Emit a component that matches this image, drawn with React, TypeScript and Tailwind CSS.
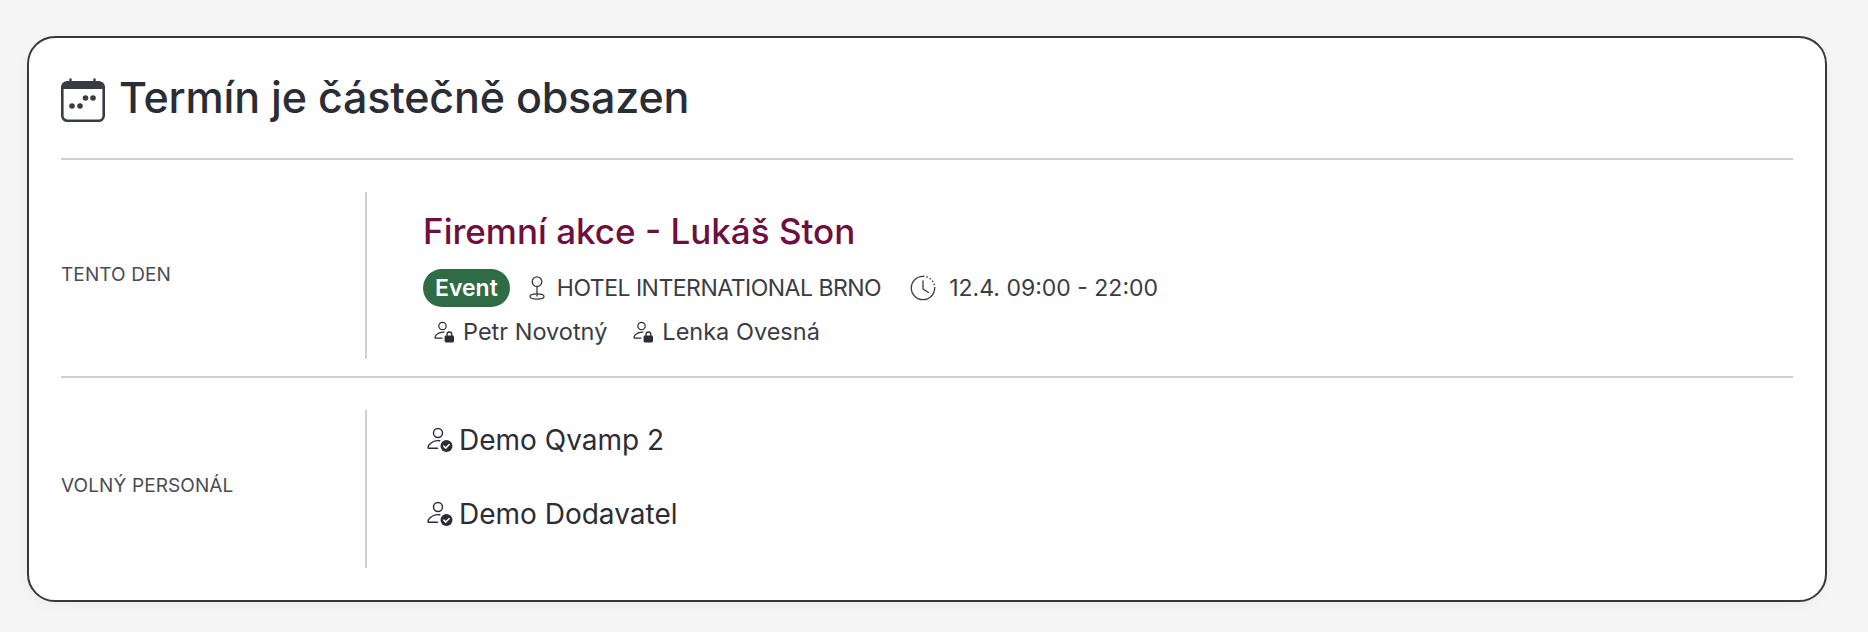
const PersonCheck = () => (
  <svg viewBox="0 0 26 26" className="w-[26px] h-[26px] shrink-0 text-[#2b2d36]">
    <circle cx="11" cy="6" r="4.5" fill="none" stroke="currentColor" strokeWidth="1.4" />
    <path d="M1 20.8c0-1.2.5-2.6 1.6-3.6 2.2-2.2 5-3.6 8.4-3.6.6 0 1.2 0 1.8.1M1.2 21.2h9.3" fill="none" stroke="currentColor" strokeWidth="1.4" strokeLinecap="round" />
    <circle cx="19.5" cy="19" r="6" fill="currentColor" />
    <path d="M16.8 19.1l2 2 3.4-3.6" fill="none" stroke="#fff" strokeWidth="1.5" strokeLinecap="round" strokeLinejoin="round" />
  </svg>
);

const PersonLock = () => (
  <svg viewBox="0 0 21 22" className="w-[21px] h-[22px] shrink-0 text-[#2b2d36]">
    <circle cx="8.5" cy="5" r="3.7" fill="none" stroke="currentColor" strokeWidth="1.2" />
    <path d="M1 16.8c0-1 .4-2 1.2-2.9 1.7-1.7 3.9-2.8 6.6-2.8.4 0 .8 0 1.2.1M1.2 17.2h6.8" fill="none" stroke="currentColor" strokeWidth="1.2" strokeLinecap="round" />
    <path d="M13 15v-1.6a2.4 2.4 0 0 1 4.8 0V15" fill="none" stroke="currentColor" strokeWidth="1.3" />
    <rect x="10.6" y="14.5" width="9.4" height="7" rx="1.4" fill="currentColor" />
  </svg>
);

const CalendarIcon = () => (
  <svg viewBox="0 0 44 44" className="w-[44px] h-[44px] shrink-0 mt-[6px] text-[#3a3c44]">
    <path d="M9.5 .5v6M33.5 .5v6" stroke="currentColor" strokeWidth="2.4" />
    <rect x="1.3" y="4.3" width="41.4" height="38.4" rx="5" fill="none" stroke="currentColor" strokeWidth="2.6" />
    <path d="M1 9a5 5 0 0 1 5-5h32a5 5 0 0 1 5 5v2H1z" fill="currentColor" />
    <circle cx="11" cy="28" r="2.8" fill="currentColor" />
    <circle cx="19" cy="28" r="2.8" fill="currentColor" />
    <circle cx="24.5" cy="20" r="2.8" fill="currentColor" />
    <circle cx="32" cy="20" r="2.8" fill="currentColor" />
  </svg>
);

const PinIcon = () => (
  <svg viewBox="0 0 16 24" className="w-[16px] h-[24px] shrink-0 text-[#3a3c44]" fill="none" stroke="currentColor" strokeWidth="1.3">
    <circle cx="8" cy="5.7" r="4.8" />
    <path d="M8 10.5V20.5" />
    <ellipse cx="8" cy="20.5" rx="7" ry="2.6" />
  </svg>
);

const ClockIcon = () => (
  <svg viewBox="0 0 26 26" className="w-[26px] h-[26px] shrink-0 text-[#3a3c44]" fill="none" stroke="currentColor" strokeWidth="1.3">
    <path d="M13 1.3A11.7 11.7 0 1 0 24.7 13" strokeLinecap="round" />
    <path d="M13 1.3A11.7 11.7 0 0 1 24.7 13" strokeDasharray="1.3 2.2" strokeWidth="1.5" />
    <path d="M13 6v8l5.5 3.5" strokeLinecap="round" strokeLinejoin="round" />
  </svg>
);

export default function App() {
  return (
    <div className="min-h-[632px] bg-[#f5f5f5] pt-[36px] pl-[27px] pr-[41px] font-['Inter',sans-serif] text-[#2b2d36]">
      <div className="h-[566px] bg-white border-2 border-[#38393d] rounded-[28px] px-[32px] shadow-[0_4px_12px_rgba(0,0,0,0.04)]">
        <div className="h-[122px] flex items-center gap-[14px] border-b-2 border-[#d0d0d0] pb-[2px]">
          <CalendarIcon />
          <h1 className="text-[43px] font-medium tracking-[-0.2px]">Termín je částečně obsazen</h1>
        </div>

        <div className="flex items-center pt-[32px] pb-[17px] border-b-2 border-[#d0d0d0]">
          <div className="w-[304px] text-[19px] tracking-[0.1px] text-[#4a4c54] uppercase">Tento den</div>
          <div className="h-[167px] border-l-2 border-[#d0d0d0] pl-[56px] flex flex-col justify-center pt-[10px]">
            <div className="text-[35px] font-medium text-[#6d1040] leading-[40px] mb-[17px]">Firemní akce - Lukáš Ston</div>
            <div className="flex items-center text-[23px] text-[#3a3c44] h-[38px] pt-px">
              <span className="bg-[#2f6b45] text-white font-semibold rounded-full px-[12px] h-[38px] flex items-center mr-[19px]">Event</span>
              <PinIcon />
              <span className="ml-[12px] mr-[29px] tracking-[-0.5px]">HOTEL INTERNATIONAL BRNO</span>
              <ClockIcon />
              <span className="ml-[13px]">12.4. 09:00 - 22:00</span>
            </div>
            <div className="flex items-center text-[23.5px] text-[#3a3c44] mt-[8px] pl-[11px]">
              <PersonLock />
              <span className="ml-[8px] mr-[26px]">Petr Novotný</span>
              <PersonLock />
              <span className="ml-[8px]">Lenka Ovesná</span>
            </div>
          </div>
        </div>

        <div className="flex items-center pt-[32px]">
          <div className="w-[304px] pb-[5px] text-[19px] tracking-[0.1px] text-[#4a4c54] uppercase">Volný personál</div>
          <div className="h-[158px] border-l-2 border-[#d0d0d0] pl-[60px] pt-[15px] flex flex-col gap-[44px] text-[28px]">
            <div className="flex items-center gap-[6px] h-[30px]"><PersonCheck />Demo Qvamp 2</div>
            <div className="flex items-center gap-[6px] h-[30px]"><PersonCheck />Demo Dodavatel</div>
          </div>
        </div>
      </div>
    </div>
  );
}
